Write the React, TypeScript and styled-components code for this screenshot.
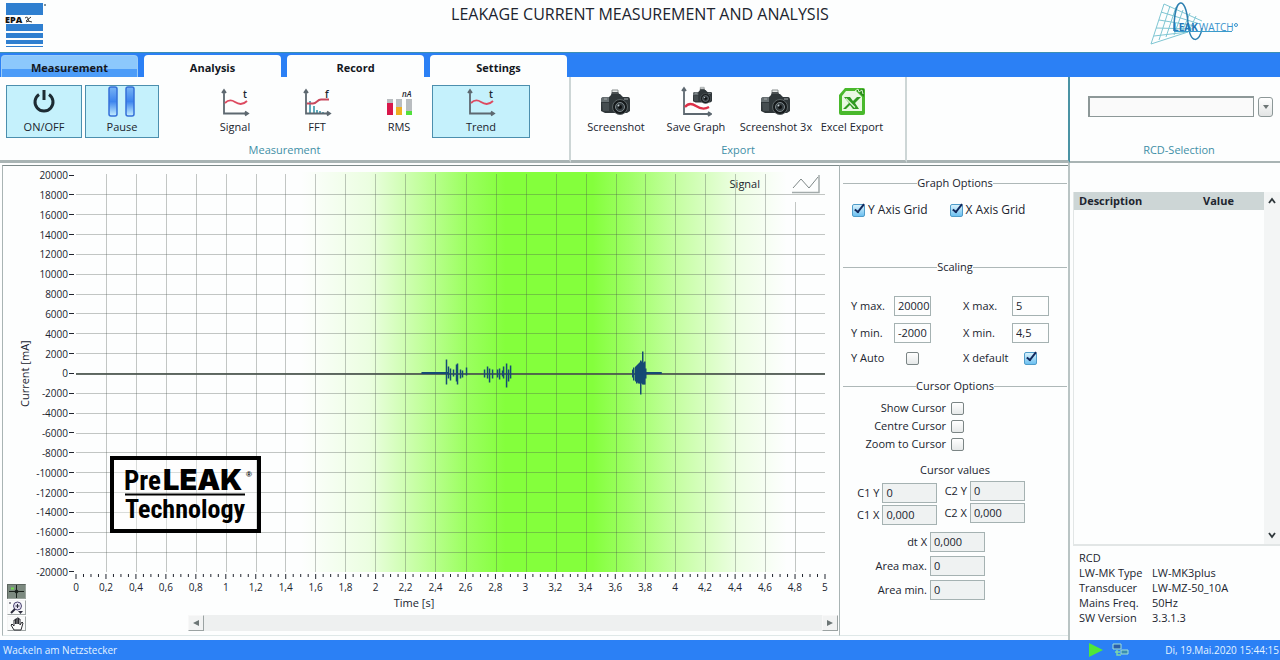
import React, { useState } from "react";
import styled, { createGlobalStyle, css } from "styled-components";

const GlobalStyle = createGlobalStyle`
  *, *::before, *::after { box-sizing: border-box; }
  body {
    margin: 0;
    background: #fdfefe;
    color: #20242e;
    font: 11px/14px "Open Sans", "Noto Sans", sans-serif;
  }
  button, input, select { font: inherit; color: inherit; }
`;

const BLUE = "#2b80f5";
const LINE = "#a9b4b4";
const TEAL = "#3f8fa6";

const Page = styled.div`
  display: flex;
  flex-direction: column;
  min-height: 100vh;
`;

/* ---------- header ---------- */

const Header = styled.header`
  display: grid;
  grid-template-columns: 130px 1fr 130px;
  height: 52px;
`;

const Title = styled.h1`
  margin: 0;
  padding-top: 5px;
  font-size: 16px;
  line-height: 18px;
  font-weight: 400;
  text-align: center;
`;

const CompanyLogo = styled.svg`
  margin: 1px 0 0 4px;
`;

const ProductLogo = styled.svg`
  margin-top: 1px;
`;

/* ---------- tabs ---------- */

const TabBar = styled.nav`
  display: flex;
  gap: 6px;
  height: 25px;
  padding: 2px 0 0 1px;
  background: ${BLUE};
  border-top: 1px solid #3c8fb4;
`;

const Tab = styled.button<{ $home?: boolean }>`
  width: 137px;
  padding: 4px 0 0;
  border: 0;
  border-radius: 4px 4px 0 0;
  background: #fdfefe;
  font-weight: 700;
  color: #14181f;
  ${(p) =>
    p.$home &&
    css`
      border: 1px solid #9ccdf7;
      border-bottom: 0;
      padding-top: 3px;
      background: linear-gradient(#8cc8fc 0 60%, #4c9cf8 60% 100%);
    `}
`;

/* ---------- ribbon ---------- */

const Ribbon = styled.div`
  display: flex;
  height: 86px;
`;

const Group = styled.section<{ $width?: number; $divider?: string }>`
  display: flex;
  flex-direction: column;
  ${(p) => (p.$width ? `flex: 0 0 ${p.$width}px;` : "flex: 1;")}
  border-right: 2px solid ${(p) => p.$divider ?? "#cdd6d6"};
  border-bottom: 3px solid ${LINE};
  padding: 8px 6px 0;

  &:last-child {
    border-right: 0;
    border-bottom: 2px solid ${LINE};
    padding: 8px 0 2px 8px;
  }
`;

const GroupTools = styled.div`
  display: flex;
  gap: 3px;
  height: 53px;
`;

const GroupName = styled.h2`
  margin: 5px 0 0;
  font-size: 11px;
  line-height: 14px;
  font-weight: 400;
  text-align: center;
  color: ${TEAL};
`;

const Cluster = styled.div`
  display: flex;
  gap: 22px;
  margin-left: 43px;
`;

const ToolButton = styled.button<{ $width: number; $on?: boolean }>`
  display: flex;
  flex-direction: column;
  align-items: center;
  justify-content: flex-end;
  gap: 1px;
  width: ${(p) => p.$width}px;
  padding: 0 0 3px;
  border: 1px solid ${(p) => (p.$on ? "#4c8fae" : "transparent")};
  background: ${(p) => (p.$on ? "#c5f1fc" : "transparent")};
  white-space: nowrap;
`;

const Picker = styled.label`
  display: flex;
  align-items: center;
  gap: 4px;
  height: 53px;
  padding: 0 7px 10px 10px;
`;

const PickerSelect = styled.select`
  appearance: none;
  flex: 1;
  height: 21px;
  border: 2px solid #8d9898;
  border-right-width: 1px;
  border-bottom-width: 1px;
  border-radius: 0;
  background: #fafafa;
`;

const PickerArrow = styled.span`
  display: grid;
  place-items: center;
  width: 15px;
  height: 20px;
  border: 1px solid #8d9898;
  border-radius: 3px;
  background: linear-gradient(#ffffff, #e2e4e4);
`;

/* ---------- main ---------- */

const Main = styled.main`
  display: flex;
  flex: 1;
`;

const GraphPanel = styled.section`
  flex: 1;
  display: grid;
  grid-template-columns: 73px 1fr;
  grid-template-rows: 1fr 20px 19px 24px;
  margin: 2px 0 4px 2px;
  padding: 9px 14px 0 0;
  border: 1px solid ${LINE};
  border-top-color: #7d8a8a;
  border-bottom-color: #dfe8e8;
`;

const YAxis = styled.div`
  display: flex;
  justify-content: space-between;
  padding-left: 15px;
`;

const YTitle = styled.div`
  writing-mode: vertical-rl;
  transform: rotate(180deg);
  text-align: center;
`;

const YLabels = styled.div`
  display: flex;
  flex-direction: column;
  justify-content: space-between;
`;

const YLabel = styled.div`
  display: flex;
  align-items: center;
  justify-content: flex-end;
  gap: 1px;
  height: 0;
  font-size: 10px;

  &::after {
    content: "";
    width: 5px;
    height: 1px;
    margin-right: 2px;
    background: #20242e;
  }
`;

const Plot = styled.div`
  position: relative;
  min-height: 397px;
`;

const PlotSvg = styled.svg`
  position: absolute;
  inset: 0;
  width: 100%;
  height: 100%;
  overflow: visible;

  line, path {
    vector-effect: non-scaling-stroke;
  }
`;

const Legend = styled.div`
  position: absolute;
  top: -1px;
  right: 5px;
  display: flex;
  align-items: center;
  gap: 32px;
`;

const Stamp = styled.svg`
  position: absolute;
  left: 34px;
  bottom: 39px;
  background: rgba(255, 255, 255, 0.4);
`;

const XAxis = styled.div`
  grid-column: 2;
`;

const Ruler = styled.svg`
  display: block;
  width: 100%;
  height: 8px;
  overflow: visible;
`;

const XLabels = styled.div`
  display: flex;
  justify-content: space-between;
`;

const XLabel = styled.div`
  display: flex;
  justify-content: center;
  width: 0;
  font-size: 10px;
`;

const XTitle = styled.div`
  grid-column: 1 / -1;
  grid-row: 3;
  padding-top: 4px;
  text-align: center;
`;

const Palette = styled.div`
  grid-column: 1;
  grid-row: 2 / 5;
  display: flex;
  flex-direction: column;
  gap: 1px;
  padding: 12px 0 0 4px;
  z-index: 1;
`;

const PaletteButton = styled.button<{ $on?: boolean }>`
  display: grid;
  place-items: center;
  width: 19px;
  height: 15px;
  padding: 0;
  border: 1px solid;
  border-color: ${(p) => (p.$on ? "#5d6660 #9aa49d #9aa49d #5d6660" : "#f4f4f4 #a0a6a6 #a0a6a6 #f4f4f4")};
  background: ${(p) => (p.$on ? "#7c8a80" : "#fafbfb")};
`;

const ScrollTrack = styled.div`
  grid-column: 2;
  grid-row: 4;
  display: flex;
  justify-content: space-between;
  height: 16px;
  margin: 4px -13px 0 112px;
  background: #eef0f0;
`;

const ScrollButton = styled.button`
  display: grid;
  place-items: center;
  width: 16px;
  padding: 0;
  border: 1px solid;
  border-color: #f8f8f8 #9ba3a3 #9ba3a3 #f8f8f8;
  background: #f2f3f3;
`;

/* ---------- options ---------- */

const Options = styled.aside`
  flex: 0 0 228px;
  margin: 2px 0 4px;
  padding: 9px 1px 0 3px;
  border-top: 1px solid #7d8a8a;
  border-bottom: 1px solid #dfe8e8;
`;

const Heading = styled.h2<{ $above?: number }>`
  display: flex;
  align-items: center;
  height: 16px;
  margin: ${(p) => p.$above ?? 0}px 0 0;
  font-size: 11px;
  font-weight: 400;

  &::before,
  &::after {
    content: "";
    flex: 1;
    height: 1px;
    background: #aeb8b8;
  }
`;

const Tick = styled.input.attrs({ type: "checkbox" })`
  appearance: none;
  position: relative;
  flex: none;
  width: 13px;
  height: 13px;
  margin: 0;
  border: 1px solid #7b8585;
  border-radius: 2px;
  background: linear-gradient(#ffffff, #e6e9e9);

  &:checked {
    border-color: #4f9cc9;
    background: linear-gradient(#d9f2fd, #6cc0f0);
  }

  &:checked::after {
    content: "";
    position: absolute;
    left: 4px;
    top: -3px;
    width: 5px;
    height: 11px;
    border: solid #12285c;
    border-width: 0 2px 2px 0;
    transform: rotate(38deg);
  }
`;

const GridChecks = styled.div`
  display: flex;
  gap: 22px;
  margin-top: 12px;
  padding-left: 9px;
`;

const CheckLabel = styled.label`
  display: flex;
  align-items: center;
  gap: 3px;
  font-size: 12px;
`;

const Scaling = styled.div`
  display: grid;
  grid-template-columns: 43px 37px 81px 37px;
  grid-template-rows: 20px 20px 16px;
  gap: 7px 0;
  align-items: center;
  margin-top: 21px;
  padding-left: 8px;

  label:nth-of-type(even) {
    padding-left: 32px;
    white-space: nowrap;
  }

  ${Tick} {
    margin-left: 12px;
  }
`;

const Field = styled.input<{ $wide?: boolean }>`
  width: ${(p) => (p.$wide ? 55 : 37)}px;
  height: 20px;
  padding: 0 0 1px 3px;
  border: 1px solid #a5b2b2;
  border-radius: 0;
  background: ${(p) => (p.$wide ? "#eff2f2" : "#fdfefe")};
`;

const CursorChecks = styled.div`
  display: flex;
  flex-direction: column;
  align-items: flex-end;
  margin: 5px 103px 0 0;

  ${CheckLabel} {
    height: 18px;
    gap: 5px;
    font-size: 11px;
  }
`;

const Caption = styled.h3`
  margin: 10px 0 4px;
  font-size: 11px;
  line-height: 14px;
  font-weight: 400;
  text-align: center;
`;

const ValuePair = styled.div`
  display: flex;
  align-items: flex-start;
  gap: 7px;
  padding-left: 14px;
`;

const ValueColumn = styled.div<{ $above?: number; $gap?: number }>`
  display: flex;
  flex-direction: column;
  align-items: flex-end;
  gap: ${(p) => p.$gap ?? 2}px;
  padding-top: ${(p) => p.$above ?? 0}px;
`;

const ValueLabel = styled.label`
  display: flex;
  align-items: center;
  gap: 3px;
`;

const Totals = styled(ValueColumn)`
  margin-right: 82px;
`;

/* ---------- side panel ---------- */

const Side = styled.aside`
  display: flex;
  flex-direction: column;
  flex: 0 0 212px;
  border-left: 2px solid #b9c4c4;
  padding: 29px 0 15px 3px;
`;

const ListBox = styled.div`
  display: flex;
  flex: 1;
  border: 1px solid #e2e6e6;
  border-width: 0 0 2px 1px;
`;

const DataTable = styled.table`
  flex: 1;
  align-self: flex-start;
  border-collapse: collapse;
  background: #cdd6d6;

  th {
    height: 18px;
    padding: 0 0 0 5px;
    text-align: left;
    font-weight: 700;
  }
  th:first-child { width: 124px; }
`;

const ListScroll = styled.div`
  display: flex;
  flex-direction: column;
  justify-content: space-between;
  width: 16px;
  background: #f3f5f5;
`;

const ListArrow = styled.button`
  display: grid;
  place-items: center;
  height: 18px;
  padding: 0;
  border: 0;
  background: none;
`;

const Info = styled.table`
  align-self: flex-start;
  margin: 4px 0 0 6px;
  border-collapse: collapse;

  th, td {
    height: 15px;
    padding: 0;
    text-align: left;
    font-weight: 400;
    line-height: 15px;
    white-space: nowrap;
  }
  th { width: 73px; }
`;

/* ---------- status bar ---------- */

const Status = styled.footer`
  display: flex;
  align-items: center;
  height: 20px;
  padding: 0 1px 0 3px;
  background: ${BLUE};
  color: #e4f3ff;
  font-size: 10px;
`;

const StatusIcons = styled.div`
  display: flex;
  gap: 8px;
  margin: 0 35px 0 auto;
`;

/* ---------- drawings ---------- */

const AxesIcon = ({ kind, mark }: { kind: "wave" | "fft"; mark: string }) => (
  <svg width="30" height="32" viewBox="0 0 30 32" fill="none">
    <g transform="translate(0 1)">
      {kind === "fft" && (
        <path d="M8 13v13M12 18v8M15 22v4M18 23v3M21 24v2" stroke="#5fa9ba" strokeWidth="2" />
      )}
      <path d="M4 3v22.500h23M2 5l2-3 2 3M25 23.500l3 2-3 2" stroke="#5d6870" strokeWidth="1.800" />
      {kind === "wave" ? (
        <path d="M5 15c4-4 7-3 10-1s7 4 12-1" stroke="#dd4a60" strokeWidth="1.800" />
      ) : (
        <path d="M5 15.500h6c4 0 4-4 8-4h8" stroke="#c9485c" strokeWidth="1.800" />
      )}
    </g>
    <text x="23" y="11" fontSize="10" fontWeight="600" fill="#20242e">
      {mark}
    </text>
  </svg>
);

const RmsIcon = () => (
  <svg width="30" height="32" viewBox="0 0 30 32">
    <text x="18" y="10" fontSize="8" fontWeight="600" fontStyle="italic" fill="#20242e">nA</text>
    <path d="M3 12h6v4H3zM12 12h6v8h-6zM22 12h6v12h-6z" fill="#b9bdc0" />
    <path d="M3 16h6v12H3z" fill="#d8174a" />
    <path d="M12 20h6v8h-6z" fill="#eeaf20" />
    <path d="M22 24h6v4h-6z" fill="#52e03c" />
  </svg>
);

const CameraShape = () => (
  <g>
    <path d="M11 7V2h6v5" fill="#e6e8e8" stroke="#8a9090" />
    <path d="M10 7l1-3h6l2 3z" fill="#4c5254" />
    <path d="M0 12q0-3 3-3h5l3-3h8l3 3h5q2 0 2 3v11l-3 2H4l-4-2z" fill="#30373a" />
    <path d="M0 12q0-3 3-3h5v5H0z" fill="#687073" />
    <path d="M3 11h3M23 11h4" stroke="#a4abad" />
    <path d="M1 15h7v8H2z" fill="#454d50" />
    <circle cx="19" cy="19" r="7.500" fill="#15191b" stroke="#5c6466" />
    <circle cx="19" cy="19" r="4.500" fill="#343c40" stroke="#808a8e" />
    <circle cx="19" cy="19" r="2" fill="#0c0f10" />
    <circle cx="17.500" cy="17.500" r="1" fill="#c7d0d4" />
  </g>
);

const CameraIcon = () => (
  <svg width="30" height="31" viewBox="0 0 30 31"><CameraShape /></svg>
);

const SaveGraphIcon = () => (
  <svg width="32" height="33" viewBox="0 0 32 33" fill="none">
    <path d="M4 3v25h26M2 5l2-3 2 3M28 26l3 2-3 2" stroke="#5d6870" strokeWidth="1.800" />
    <path d="M5 21c4-5 8-3 11-1s8 4 13 1" stroke="#dd3048" strokeWidth="2.200" />
    <g transform="translate(13 0) scale(.66)"><CameraShape /></g>
  </svg>
);

const ExcelIcon = () => (
  <svg width="28" height="32" viewBox="0 0 28 32">
    <path d="M7 1h18q2 0 2 2v23q0 2-2 2H3q-2 0-2-2V8z" fill="#49b92c" />
    <path d="M8 4h10l6 6v14H4V9z" fill="#e9f8e2" />
    <path d="M18 3l8 7V2z" fill="#2b8a1c" />
    <path d="M17 4l3-2 1 3 3-2 1 4" stroke="#d8f5cc" fill="none" />
    <path d="M6 10h6l3 4 4-4h4l-6 6 4 6h-6l-3-4-4 4H5l6-6z" fill="#2f9a20" />
    <path d="M8 11.500l9 9" stroke="#d9f3cd" strokeWidth="1.300" />
  </svg>
);

const PowerIcon = () => (
  <svg width="28" height="31" viewBox="0 0 28 31" fill="none" stroke="#1d2b33" strokeWidth="3">
    <path d="M9 6.500a9 9 0 1 0 10 0" />
    <path d="M14 2v10" />
  </svg>
);

const PauseIcon = () => (
  <svg width="28" height="33" viewBox="0 0 28 33">
    <defs>
      <linearGradient id="bar" x1="0" y1="0" x2="0" y2="1">
        <stop offset="0" stopColor="#78b4f4" />
        <stop offset=".5" stopColor="#3c84ee" />
        <stop offset="1" stopColor="#c6f0ff" />
      </linearGradient>
    </defs>
    <rect x="1" y="1" width="8" height="29" rx="2" fill="url(#bar)" stroke="#3470d8" strokeWidth="1.500" />
    <rect x="18" y="1" width="8" height="29" rx="2" fill="url(#bar)" stroke="#3470d8" strokeWidth="1.500" />
  </svg>
);

const Triangle = ({ dir }: { dir: "left" | "right" | "down" }) => (
  <svg width="8" height="8" viewBox="0 0 8 8" fill="#6d7676">
    <path d={dir === "left" ? "M7 1v6L1 4z" : dir === "right" ? "M1 1v6l6-3z" : "M1 2h6L4 6z"} />
  </svg>
);

const Chevron = ({ up }: { up?: boolean }) => (
  <svg width="8" height="8" viewBox="0 0 8 8" fill="none" stroke="#30383c" strokeWidth="1.800">
    <path d={up ? "M1 6l3-4 3 4" : "M1 2l3 4 3-4"} />
  </svg>
);

/* ---------- chart ---------- */

const W = 748;
const H = 397;
const MID = H / 2;

// Spikes of the trend: position on the x axis, reach above and below zero.
const spikes: [number, number, number][] = [
  [370, 14, 11], [372, 7, 5], [374, 5, 7], [377, 4, 3], [380, 9, 8], [381, 10, 11],
  [384, 4, 5], [386, 3, 4], [390, 6, 2],
  [408, 4, 4], [411, 7, 5], [413, 5, 9], [416, 4, 5],
  [421, 4, 4], [423, 5, 6], [426, 3, 3], [427, 7, 5], [430, 10, 14], [432, 4, 8], [434, 8, 5],
  [556, 4, 4], [557, 6, 7], [559, 7, 8], [560, 8, 10], [561, 9, 9], [562, 10, 10],
  [563, 11, 10], [564, 13, 21], [565, 12, 10], [566, 22, 11], [567, 11, 11], [568, 12, 11], [569, 5, 5],
];

const steps = (n: number) => Array.from({ length: n }, (_, i) => i);
const yValues = steps(21).map((i) => 20000 - i * 2000);
const xValues = steps(26).map((i) => String(Math.round(i * 2) / 10).replace(".", ","));

const TrendPlot = () => (
  <PlotSvg viewBox={`0 0 ${W} ${H}`} preserveAspectRatio="none" shapeRendering="crispEdges">
    <defs>
      <linearGradient id="zone">
        <stop offset="0" stopColor="#8dff45" stopOpacity="0" />
        <stop offset=".14" stopColor="#8dff45" stopOpacity=".16" />
        <stop offset=".24" stopColor="#8dff45" stopOpacity=".5" />
        <stop offset=".34" stopColor="#8aff44" stopOpacity=".85" />
        <stop offset=".42" stopColor="#84ff3c" />
        <stop offset=".6" stopColor="#84ff3c" />
        <stop offset=".68" stopColor="#8aff44" stopOpacity=".8" />
        <stop offset=".78" stopColor="#8dff45" stopOpacity=".48" />
        <stop offset=".9" stopColor="#8dff45" stopOpacity=".14" />
        <stop offset="1" stopColor="#8dff45" stopOpacity="0" />
      </linearGradient>
    </defs>
    <rect x="225" y="-3" width="485" height={H + 3} fill="url(#zone)" />
    <g stroke="#46524c" strokeOpacity=".32">
      {steps(24).map((i) => (
        <line key={`v${i}`} x1={Math.round(((i + 1) * W) / 25) + 0.5} x2={Math.round(((i + 1) * W) / 25) + 0.5} y1={i === 23 ? 27 : -1} y2={H} />
      ))}
      {steps(19).map((i) => (
        <line key={`h${i}`} x1="0" x2={W} y1={((i + 1) * H) / 20} y2={((i + 1) * H) / 20} />
      ))}
    </g>
    <line x1="0" x2={W} y1={MID} y2={MID} stroke="#4a554e" strokeWidth="2" strokeOpacity=".85" />
    <g stroke="#154a74" strokeWidth="1.500" shapeRendering="auto">
      <path d={`M345 ${MID - 0.5}H372M569 ${MID - 0.5}H585`} strokeWidth="2" />
      {spikes.map(([x, up, down]) => (
        <line key={x} x1={x} x2={x} y1={MID - up} y2={MID + down} />
      ))}
    </g>
  </PlotSvg>
);

const NARROW = '"Roboto Condensed", Roboto, sans-serif';

const PreLeakStamp = () => (
  <Stamp width="151" height="77" viewBox="0 0 151 77" fontWeight="700" fill="#000">
    <rect x="2" y="2" width="147" height="73" fill="none" stroke="#000" strokeWidth="4" />
    <text x="14" y="34" fontSize="27" fontFamily={NARROW}>Pre</text>
    <text x="53" y="34" fontSize="29" fontWeight="900" fontFamily='Inter, "Liberation Sans", sans-serif'>LEAK</text>
    <text x="136" y="21" fontSize="8" fontFamily='"Liberation Sans", sans-serif'>®</text>
    <path d="M15 38.500h120" stroke="#000" strokeWidth="2" />
    <text x="15" y="62" fontSize="26" fontFamily={NARROW}>Technology</text>
  </Stamp>
);

/* ---------- app ---------- */

function Check({ label, on, children }: { label?: string; on?: boolean; children?: React.ReactNode }) {
  const [checked, setChecked] = useState(!!on);
  const box = <Tick checked={checked} onChange={(e) => setChecked(e.target.checked)} />;
  return children ? (
    <CheckLabel>{children}{box}</CheckLabel>
  ) : (
    <CheckLabel>{box}{label}</CheckLabel>
  );
}

const Value = ({ name, value }: { name: string; value: string }) => (
  <ValueLabel>{name}<Field $wide readOnly value={value} /></ValueLabel>
);

const info = [
  ["RCD", ""],
  ["LW-MK Type", "LW-MK3plus"],
  ["Transducer", "LW-MZ-50_10A"],
  ["Mains Freq.", "50Hz"],
  ["SW Version", "3.3.1.3"],
];

export default function App() {
  return (
    <Page>
      <GlobalStyle />
      <Header>
        <CompanyLogo width="46" height="48" viewBox="0 0 46 48">
          <path d="M2 2h37v12H2zM2 23h37v7H2zM2 32h37v5H2zM2 39h37v4H2zM2 45h37v1H2z" fill="#2f7fd0" />
          <text x="1" y="22" fontSize="9" fontWeight="800" fill="#111">EPA</text>
          <path d="M21 17q3-2 3 1t4 3M27 16l-5 4M22 21l3-1" stroke="#333" fill="none" />
          <circle cx="41" cy="4" r="1" fill="#56707c" />
        </CompanyLogo>
        <Title>LEAKAGE CURRENT MEASUREMENT AND ANALYSIS</Title>
        <ProductLogo width="92" height="46" viewBox="0 0 92 46" fill="none">
          <path
            d="M14 3L1 43M20 5L9 39M26 6L16 36M33 9L24 34M40 12L32 31M46 15L39 30M14 3L52 20M11 11L50 23M9 19L46 25M6 27L44 28M4 35L38 31M1 43L38 31"
            stroke="#7fc6d3"
          />
          <path d="M24 30C24-6 36-6 38 22C40 44 50 42 52 27" stroke="#2c7fb0" strokeWidth="1.500" />
          <path d="M24 30.500H82" stroke="#3b9bcb" />
          <text x="23" y="30" fontSize="10" fontWeight="700" fill="#2678b8">LEAK</text>
          <text x="49" y="30" fontSize="10" fill="#3b93cc">WATCH</text>
          <circle cx="86" cy="24" r="1.500" stroke="#3b93cc" />
        </ProductLogo>
      </Header>

      <TabBar>
        <Tab $home>Measurement</Tab>
        <Tab>Analysis</Tab>
        <Tab>Record</Tab>
        <Tab>Settings</Tab>
      </TabBar>

      <Ribbon>
        <Group $width={571}>
          <GroupTools>
            <ToolButton $width={76} $on><PowerIcon />ON/OFF</ToolButton>
            <ToolButton $width={74} $on><PauseIcon />Pause</ToolButton>
            <Cluster>
              <ToolButton $width={60}><AxesIcon kind="wave" mark="t" />Signal</ToolButton>
              <ToolButton $width={60}><AxesIcon kind="fft" mark="f" />FFT</ToolButton>
              <ToolButton $width={60}><RmsIcon />RMS</ToolButton>
            </Cluster>
            <ToolButton $width={98} $on><AxesIcon kind="wave" mark="t" />Trend</ToolButton>
          </GroupTools>
          <GroupName>Measurement</GroupName>
        </Group>
        <Group $width={336}>
          <GroupTools>
            <ToolButton $width={78}><CameraIcon />Screenshot</ToolButton>
            <ToolButton $width={76}><SaveGraphIcon />Save Graph</ToolButton>
            <ToolButton $width={78}><CameraIcon />Screenshot 3x</ToolButton>
            <ToolButton $width={68}><ExcelIcon />Excel Export</ToolButton>
          </GroupTools>
          <GroupName>Export</GroupName>
        </Group>
        <Group $divider="#4b93a4" />
        <Group $width={210}>
          <Picker>
            <PickerSelect aria-label="RCD-Selection" defaultValue="">
              <option value="" />
            </PickerSelect>
            <PickerArrow><Triangle dir="down" /></PickerArrow>
          </Picker>
          <GroupName>RCD-Selection</GroupName>
        </Group>
      </Ribbon>

      <Main>
        <GraphPanel>
          <YAxis>
            <YTitle>Current [mA]</YTitle>
            <YLabels>{yValues.map((v) => <YLabel key={v}>{v}</YLabel>)}</YLabels>
          </YAxis>
          <Plot>
            <TrendPlot />
            <Legend>
              Signal
              <svg width="28" height="20" viewBox="0 0 28 20" fill="none">
                <path d="M1 14l8-9 8 9 9-11" stroke="#7f8888" />
                <path d="M0 18.500h27V1" stroke="#a3abab" strokeWidth="1.500" />
              </svg>
            </Legend>
            <PreLeakStamp />
          </Plot>
          <XAxis>
            <Ruler viewBox={`0 0 ${W} 8`} preserveAspectRatio="none">
              {steps(101).map((i) => (
                <line key={i} x1={(i * W) / 100} x2={(i * W) / 100} y1="2" y2={i % 4 === 0 ? 7 : 5} stroke="#20242e" />
              ))}
            </Ruler>
            <XLabels>{xValues.map((v) => <XLabel key={v}>{v}</XLabel>)}</XLabels>
          </XAxis>
          <XTitle>Time [s]</XTitle>
          <Palette>
            <PaletteButton $on aria-label="Cursor">
              <svg width="17" height="13" viewBox="0 0 17 13" fill="none" stroke="#1b231e">
                <path d="M1 6.500h15M8.500 0v13" />
                <circle cx="8.500" cy="6.500" r="1.500" fill="#1b231e" />
                <path d="M3 3.500h3" stroke="#6fe04c" strokeWidth="2" />
              </svg>
            </PaletteButton>
            <PaletteButton aria-label="Zoom">
              <svg width="17" height="14" viewBox="0 0 17 14" fill="none" stroke="#2b2b3c">
                <circle cx="9.500" cy="5" r="4" stroke="#4a4470" fill="#e8e6f4" />
                <path d="M7.500 5h4M9.500 3v4" />
                <path d="M7 8l-4 4" strokeWidth="2" />
                <path d="M10 10h5l-2.500 3z" fill="#2b2b3c" stroke="none" />
                <path d="M1 2h2" />
              </svg>
            </PaletteButton>
            <PaletteButton aria-label="Pan">
              <svg width="16" height="14" viewBox="0 0 16 14" fill="#fff" stroke="#2b2b30">
                <path d="M5 13L2 8l1-1 2 2V3h1.500v4-5H8v5-6h1.500v6-5H11v6l2-3 1 1-2 7z" />
              </svg>
            </PaletteButton>
          </Palette>
          <ScrollTrack>
            <ScrollButton aria-label="Scroll left"><Triangle dir="left" /></ScrollButton>
            <ScrollButton aria-label="Scroll right"><Triangle dir="right" /></ScrollButton>
          </ScrollTrack>
        </GraphPanel>

        <Options>
          <Heading>Graph Options</Heading>
          <GridChecks>
            <Check on label="Y Axis Grid" />
            <Check on label="X Axis Grid" />
          </GridChecks>

          <Heading $above={42}>Scaling</Heading>
          <Scaling>
            <label htmlFor="ymax">Y max.</label>
            <Field id="ymax" defaultValue="20000" />
            <label htmlFor="xmax">X max.</label>
            <Field id="xmax" defaultValue="5" />
            <label htmlFor="ymin">Y min.</label>
            <Field id="ymin" defaultValue="-2000" />
            <label htmlFor="xmin">X min.</label>
            <Field id="xmin" defaultValue="4,5" />
            <label htmlFor="yauto">Y Auto</label>
            <Tick id="yauto" />
            <label htmlFor="xdefault">X default</label>
            <Tick id="xdefault" defaultChecked />
          </Scaling>

          <Heading $above={12}>Cursor Options</Heading>
          <CursorChecks>
            <Check>Show Cursor</Check>
            <Check>Centre Cursor</Check>
            <Check>Zoom to Cursor</Check>
          </CursorChecks>

          <Caption>Cursor values</Caption>
          <ValuePair>
            <ValueColumn $above={2}>
              <Value name="C1 Y" value="0" />
              <Value name="C1 X" value="0,000" />
            </ValueColumn>
            <ValueColumn>
              <Value name="C2 Y" value="0" />
              <Value name="C2 X" value="0,000" />
            </ValueColumn>
          </ValuePair>
          <Totals $above={7} $gap={4}>
            <Value name="dt X" value="0,000" />
            <Value name="Area max." value="0" />
            <Value name="Area min." value="0" />
          </Totals>
        </Options>

        <Side>
          <ListBox>
            <DataTable>
              <thead>
                <tr><th>Description</th><th>Value</th></tr>
              </thead>
            </DataTable>
            <ListScroll>
              <ListArrow aria-label="Scroll up"><Chevron up /></ListArrow>
              <ListArrow aria-label="Scroll down"><Chevron /></ListArrow>
            </ListScroll>
          </ListBox>
          <Info>
            <tbody>
              {info.map(([name, value]) => (
                <tr key={name}><th scope="row">{name}</th><td>{value}</td></tr>
              ))}
            </tbody>
          </Info>
        </Side>
      </Main>

      <Status>
        <span>Wackeln am Netzstecker</span>
        <StatusIcons>
          <svg width="16" height="16" viewBox="0 0 16 16"><path d="M1 1l14 7-14 7z" fill="#4fe83a" /></svg>
          <svg width="18" height="16" viewBox="0 0 18 16">
            <path d="M1 2h8v5H1z" fill="#2c5ea8" stroke="#9fe0d8" />
            <path d="M9 8h7v4H9z" fill="#3a8fb0" stroke="#9fe0d8" />
            <path d="M5 8v5h4M3 10h5" stroke="#7fd6a8" fill="none" strokeWidth="1.500" />
          </svg>
        </StatusIcons>
        <span>Di, 19.Mai.2020 15:44:15</span>
      </Status>
    </Page>
  );
}
